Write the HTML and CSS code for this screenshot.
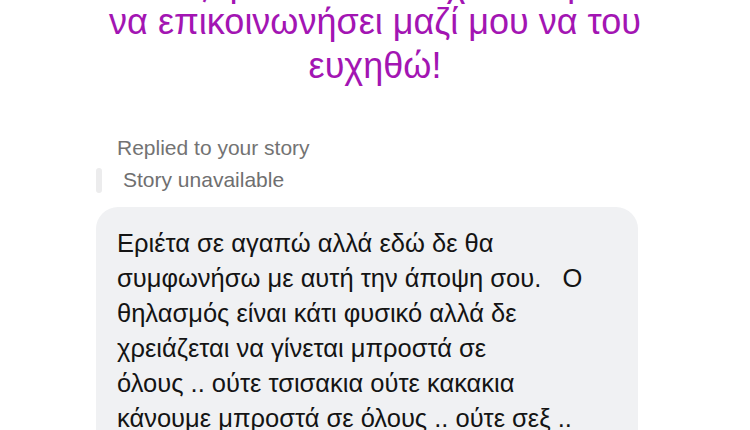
FILE: index.html
```html
<!DOCTYPE html>
<html lang="el">
<head>
<meta charset="utf-8">
<title>Message</title>
<link rel="stylesheet" href="styles.css">
</head>
<body>
<div class="page">
  <div class="caption">
    <div class="cap-line cap-first">όποιος ήθελε τελικά είχε τον τρόπο</div>
    <div class="cap-line">να επικοινωνήσει μαζί μου να του</div>
    <div class="cap-line">ευχηθώ!</div>
  </div>

  <div class="thread">
    <div class="reply-label">Replied to your story</div>
    <div class="story-ref">
      <span class="story-bar"></span>
      <span class="story-text">Story unavailable</span>
    </div>
    <div class="bubble">
      Εριέτα σε αγαπώ αλλά εδώ δε θα<br>
      συμφωνήσω με αυτή την άποψη σου.&nbsp;&nbsp; Ο<br>
      θηλασμός είναι κάτι φυσικό αλλά δε<br>
      χρειάζεται να γίνεται μπροστά σε<br>
      όλους .. ούτε τσισακια ούτε κακακια<br>
      κάνουμε μπροστά σε όλους .. ούτε σεξ ..<br>
      κάνουμε μπροστά σε όλους
    </div>
  </div>
</div>
</body>
</html>
```

FILE: styles.css
```css
html, body {
  margin: 0;
  padding: 0;
  background: #ffffff;
}

body {
  width: 750px;
  height: 430px;
  overflow: hidden;
  font-family: "Liberation Sans", Arial, sans-serif;
}

.page {
  display: flex;
  flex-direction: column;
}

.caption {
  margin-top: -33px;
  text-align: center;
  color: #a315b3;
  font-size: 36px;
}

.cap-line {
  line-height: 44px;
}

.cap-line.cap-first {
  line-height: 33px;
}

.thread {
  display: flex;
  flex-direction: column;
  padding-left: 96px;
  margin-top: 48px;
}

.reply-label {
  margin-left: 21px;
  font-size: 21px;
  line-height: 24px;
  color: #737373;
}

.story-ref {
  display: flex;
  align-items: center;
  gap: 21px;
  margin-top: 8px;
  height: 24px;
}

.story-bar {
  width: 6px;
  height: 25px;
  border-radius: 3px;
  background: #ececed;
}

.story-text {
  font-size: 21px;
  line-height: 24px;
  color: #6f6f70;
}

.bubble {
  width: 542px;
  box-sizing: border-box;
  margin-top: 15px;
  padding: 19px 10px 20px 21px;
  background: #f0f1f3;
  border-radius: 22px;
  font-size: 25.5px;
  line-height: 35px;
  color: #141414;
  white-space: nowrap;
}
```
